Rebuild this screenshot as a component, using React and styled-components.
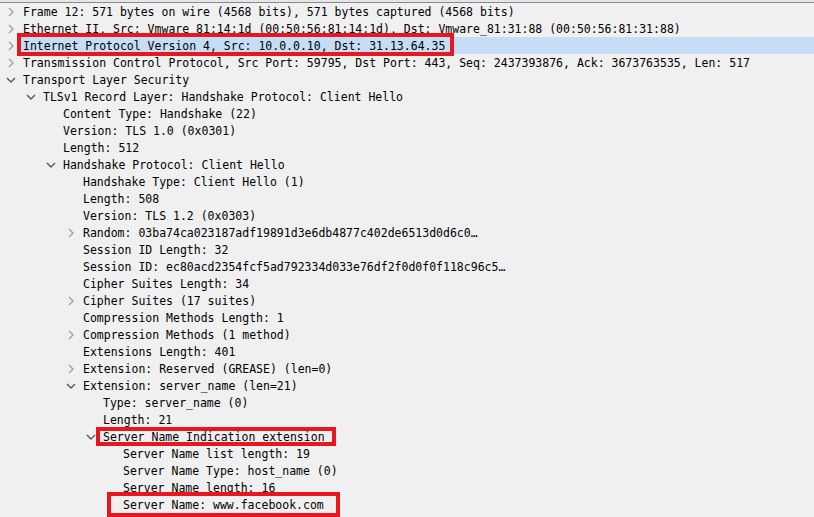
import styled, { createGlobalStyle } from "styled-components";

const GlobalStyle = createGlobalStyle`
  html, body {
    margin: 0;
    padding: 0;
    background: #f0f0f0;
  }
  body {
    font-family: "DejaVu Sans Mono", "Liberation Mono", monospace;
    font-size: 11.5px;
    color: #000;
  }
`;

const tree = [
  { level: 0, open: false, text: "Frame 12: 571 bytes on wire (4568 bits), 571 bytes captured (4568 bits)" },
  { level: 0, open: false, text: "Ethernet II, Src: Vmware_81:14:1d (00:50:56:81:14:1d), Dst: Vmware_81:31:88 (00:50:56:81:31:88)" },
  { level: 0, open: false, selected: true, box: { l: 6, r: 9, t: -4, b: -2 }, text: "Internet Protocol Version 4, Src: 10.0.0.10, Dst: 31.13.64.35" },
  { level: 0, open: false, text: "Transmission Control Protocol, Src Port: 59795, Dst Port: 443, Seq: 2437393876, Ack: 3673763535, Len: 517" },
  { level: 0, open: true, text: "Transport Layer Security" },
  { level: 1, open: true, text: "TLSv1 Record Layer: Handshake Protocol: Client Hello" },
  { level: 2, text: "Content Type: Handshake (22)" },
  { level: 2, text: "Version: TLS 1.0 (0x0301)" },
  { level: 2, text: "Length: 512" },
  { level: 2, open: true, text: "Handshake Protocol: Client Hello" },
  { level: 3, text: "Handshake Type: Client Hello (1)" },
  { level: 3, text: "Length: 508" },
  { level: 3, text: "Version: TLS 1.2 (0x0303)" },
  { level: 3, open: false, text: "Random: 03ba74ca023187adf19891d3e6db4877c402de6513d0d6c0…" },
  { level: 3, text: "Session ID Length: 32" },
  { level: 3, text: "Session ID: ec80acd2354fcf5ad792334d033e76df2f0d0f0f118c96c5…" },
  { level: 3, text: "Cipher Suites Length: 34" },
  { level: 3, open: false, text: "Cipher Suites (17 suites)" },
  { level: 3, text: "Compression Methods Length: 1" },
  { level: 3, open: false, text: "Compression Methods (1 method)" },
  { level: 3, text: "Extensions Length: 401" },
  { level: 3, open: false, text: "Extension: Reserved (GREASE) (len=0)" },
  { level: 3, open: true, text: "Extension: server_name (len=21)" },
  { level: 4, text: "Type: server_name (0)" },
  { level: 4, text: "Length: 21" },
  { level: 4, open: true, box: { l: 7, r: 11, t: -1, b: -1 }, text: "Server Name Indication extension" },
  { level: 5, text: "Server Name list length: 19" },
  { level: 5, text: "Server Name Type: host_name (0)" },
  { level: 5, text: "Server Name length: 16" },
  { level: 5, box: { l: 16, r: 16, t: -4, b: -4 }, text: "Server Name: www.facebook.com" },
];

const Chevron = ({ open }) =>
  open ? (
    <svg width="10" height="6" viewBox="0 0 10 6">
      <path d="M1 1 L5 5 L9 1" fill="none" stroke="#555" strokeWidth="1.4" />
    </svg>
  ) : (
    <svg width="6" height="10" viewBox="0 0 6 10">
      <path d="M1 1 L5 5 L1 9" fill="none" stroke="#a0a0a0" strokeWidth="1.4" />
    </svg>
  );

const App = () => {
  return (
    <>
      <GlobalStyle />
      <Pane>
        <TopRule />
        <Tree>
          {tree.map((node, i) => (
            <Row key={i} $level={node.level}>
              <Expander>{node.open !== undefined && <Chevron open={node.open} />}</Expander>
              <Cell $selected={node.selected}>
                <Label $box={node.box}>{node.text}</Label>
              </Cell>
            </Row>
          ))}
        </Tree>
      </Pane>
    </>
  );
};
export default App;

const Pane = styled.div`
  width: 814px;
  height: 517px;
  overflow: hidden;
  background: #f0f0f0;
`;

const TopRule = styled.div`
  height: 2px;
  background: #e6e6e6;
  border-bottom: 1px solid #868c94;
`;

const Tree = styled.div`
  display: flex;
  flex-direction: column;
`;

const Row = styled.div`
  display: flex;
  align-items: stretch;
  height: 17px;
  padding-left: ${(p) => 1 + p.$level * 20}px;
`;

const Expander = styled.span`
  flex: 0 0 20px;
  display: flex;
  align-items: center;
  justify-content: center;
  padding-top: 1px;
  svg {
    display: block;
  }
`;

const Cell = styled.div`
  flex: 1;
  display: flex;
  align-items: center;
  padding-left: 2px;
  white-space: nowrap;
  background: ${(p) => (p.$selected ? "#c5def5" : "transparent")};
`;

const Label = styled.span`
  position: relative;
  display: inline-block;
  height: 17px;
  line-height: 19px;
  &::before {
    content: "";
    display: ${(p) => (p.$box ? "block" : "none")};
    position: absolute;
    left: -${(p) => p.$box?.l ?? 0}px;
    right: -${(p) => p.$box?.r ?? 0}px;
    top: ${(p) => p.$box?.t ?? 0}px;
    bottom: ${(p) => p.$box?.b ?? 0}px;
    border: 4px solid #e8161f;
    pointer-events: none;
  }
`;
